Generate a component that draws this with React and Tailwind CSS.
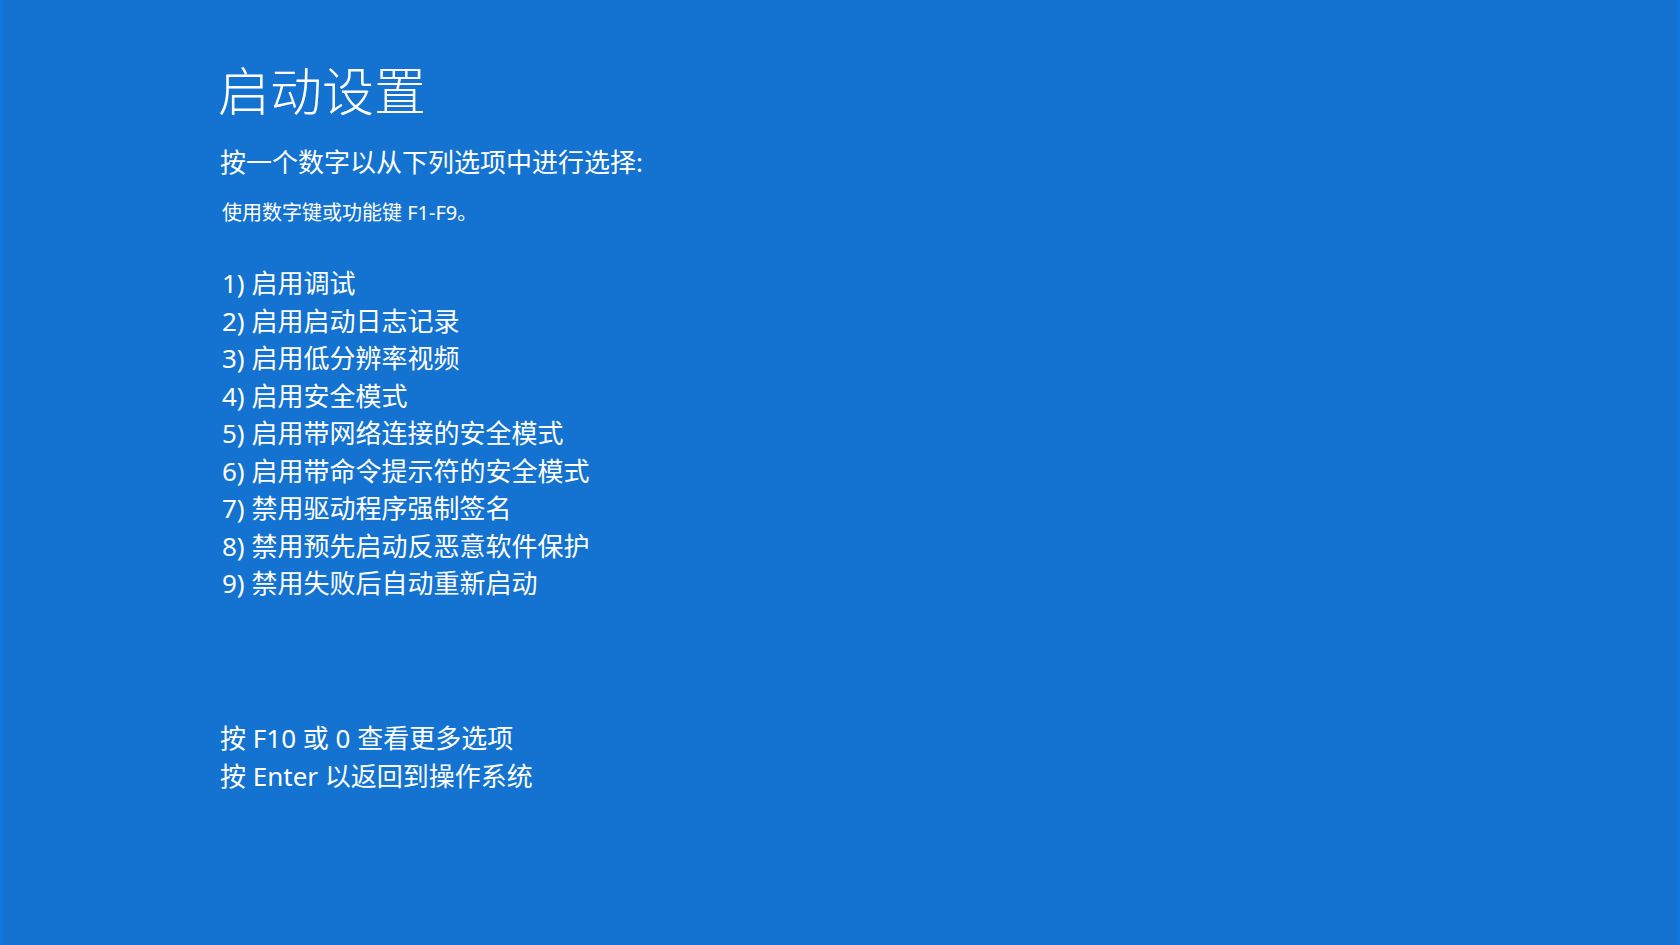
export default function App() {
  const items = [
    "1) 启用调试",
    "2) 启用启动日志记录",
    "3) 启用低分辨率视频",
    "4) 启用安全模式",
    "5) 启用带网络连接的安全模式",
    "6) 启用带命令提示符的安全模式",
    "7) 禁用驱动程序强制签名",
    "8) 禁用预先启动反恶意软件保护",
    "9) 禁用失败后自动重新启动",
  ];
  const font = { fontFamily: '"Segoe UI", "Noto Sans", "Noto Sans CJK SC", sans-serif' };
  return (
    <div
      className="w-[1680px] h-[945px] bg-[#1473d0] border-l-2 border-r-2 border-[#0f7be2] text-white overflow-hidden"
      style={font}
    >
      <div className="flex flex-col pl-[218px] pt-[59px]">
        <h1 className="text-[52px] leading-[64px] font-light -ml-[2px]">启动设置</h1>
        <p className="mt-[21px] text-[26px] leading-[36px]">按一个数字以从下列选项中进行选择:</p>
        <p className="mt-[19px] text-[20px] leading-[28px] ml-[2px]">使用数字键或功能键 F1-F9。</p>
        <ul className="mt-[38px] flex flex-col ml-[2px]">
          {items.map((t) => (
            <li key={t} className="text-[26px] leading-[37.5px]">{t}</li>
          ))}
        </ul>
        <div className="mt-[116px] flex flex-col">
          <p className="text-[26px] leading-[38px]">按 F10 或 0 查看更多选项</p>
          <p className="text-[26px] leading-[38px]">按 Enter 以返回到操作系统</p>
        </div>
      </div>
    </div>
  );
}
